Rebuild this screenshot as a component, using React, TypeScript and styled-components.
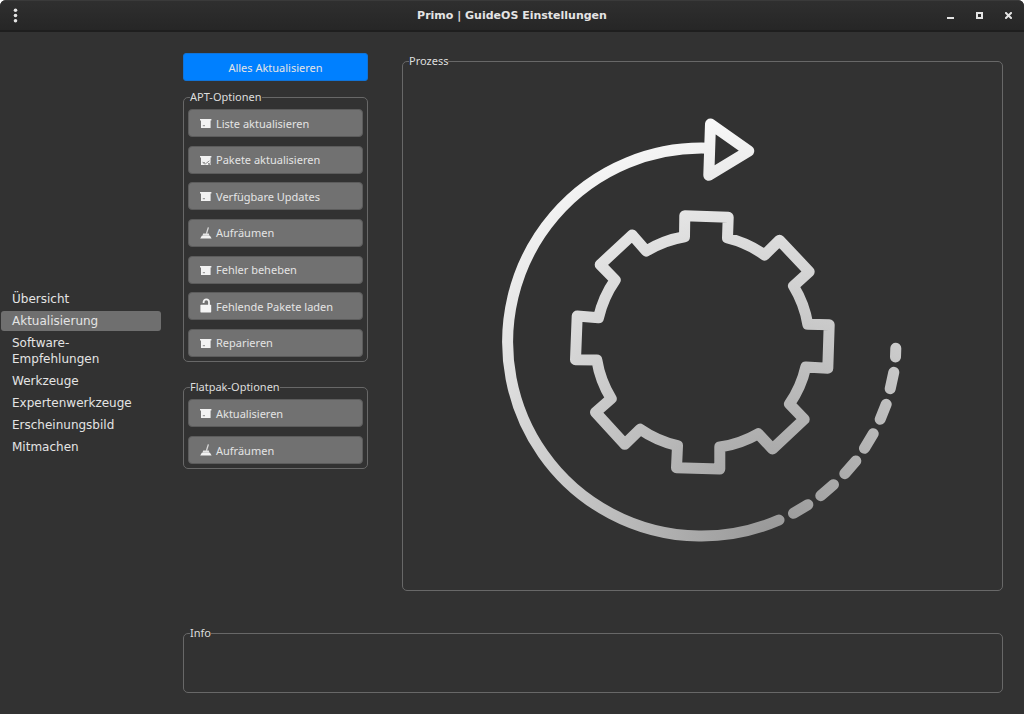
import React from "react";
import styled, { createGlobalStyle } from "styled-components";

const GlobalStyle = createGlobalStyle`
  *, *::before, *::after { box-sizing: border-box; }
  body {
    margin: 0;
    background: #ffffff;
    font-family: "Noto Sans", "Open Sans", sans-serif;
    font-size: 11px;
    color: #dedede;
  }
`;

const Window = styled.div`
  display: flex;
  flex-direction: column;
  min-height: 100vh;
  border-radius: 6px 6px 0 0;
  overflow: hidden;
  background: #323232;
`;

const TitleBar = styled.header`
  display: grid;
  grid-template-columns: 1fr auto 1fr;
  align-items: center;
  height: 32px;
  padding: 0 1px;
  background: linear-gradient(#2f2f2f, #262626);
  border-top: 1px solid #3a3a3a;
  border-bottom: 2px solid #1e1e1e;
`;

const Title = styled.h1`
  margin: 0;
  font: bold 11px/16px "DejaVu Sans", sans-serif;
  color: #e4e4e4;
`;

const WindowControls = styled.div`
  display: flex;
  justify-content: flex-end;
`;

const TitleButton = styled.button`
  display: flex;
  align-items: center;
  justify-content: center;
  width: 29px;
  height: 28px;
  padding: 0;
  border: 0;
  background: none;
  color: #e4e4e4;
`;

const Body = styled.div`
  display: flex;
  flex: 1;
`;

const Sidebar = styled.nav`
  display: flex;
  flex-direction: column;
  justify-content: center;
  gap: 2px;
  width: 162px;
  padding: 0 1px;
`;

const NavItem = styled.a<{ $active?: boolean }>`
  padding: 2px 11px;
  border-radius: 3px;
  font: 12px/16px "DejaVu Sans", sans-serif;
  color: #e4e4e4;
  text-decoration: none;
  background: ${(p) => (p.$active ? "#6f6f6f" : "transparent")};
`;

const Main = styled.main`
  display: flex;
  flex-direction: column;
  flex: 1;
  gap: 34px;
  padding: 21px;
`;

const Columns = styled.div`
  display: flex;
  flex: 1;
  gap: 34px;
`;

const Options = styled.div`
  display: flex;
  flex-direction: column;
  width: 185px;
`;

const Group = styled.fieldset<{ $gap?: number; $height?: number }>`
  display: flex;
  flex-direction: column;
  min-width: 0;
  height: ${(p) => (p.$height ? `${p.$height}px` : "auto")};
  margin: ${(p) => p.$gap ?? 0}px 0 0;
  padding: 4px;
  border: 1px solid #686868;
  border-radius: 5px;
`;

const ProcessGroup = styled(Group)`
  flex: 1;
`;

const Legend = styled.legend`
  margin-left: 2px;
  padding: 0;
  line-height: 16px;
`;

const ButtonList = styled.div<{ $height?: number }>`
  display: flex;
  flex-direction: column;
  justify-content: space-between;
  height: ${(p) => p.$height}px;
`;

const UpdateAllButton = styled.button`
  height: 28px;
  padding: 0;
  border: 1px solid #1173d6;
  border-radius: 3px;
  background: #0080ff;
  font: inherit;
  color: #e4e4e4;
`;

const OptionButton = styled.button`
  display: flex;
  align-items: center;
  gap: 4px;
  height: 28px;
  padding: 0 11px;
  border: 1px solid #5c5c5c;
  border-radius: 4px;
  background: #717171;
  font: inherit;
  color: #e4e4e4;
`;

const Drawing = styled.svg`
  flex: 1;
  width: 100%;
  min-height: 0;
`;

type IconKind = "box" | "boxCheck" | "broom" | "unlock";

const OptionIcon = ({ kind }: { kind: IconKind }) => (
  <svg width="12" height="16" viewBox="0 0 12 16" aria-hidden="true">
    {(kind === "box" || kind === "boxCheck") && (
      <>
        <path d="M0 4H11.4V5.5H10.6V13H1V5.5H0Z" fill="#f2f2f2" />
        <path d="M2.8 10.7H5" stroke="#8a8a8a" strokeWidth="1" />
      </>
    )}
    {kind === "boxCheck" && (
      <path d="M2.6 10.2L5 12.2L9.4 8.8M7.6 10.6L10.2 13.2M10.6 10.6L8 13.2" stroke="#8a8a8a" strokeWidth="0.9" fill="none" />
    )}
    {kind === "broom" && (
      <>
        <path d="M8.4 2.4L6.4 8.8" stroke="#d8d8d8" strokeWidth="1.3" fill="none" />
        <path d="M3.2 8.6H8.8L9.4 10.8H2.4Z" fill="#e6e6e6" />
        <path d="M1.8 10.8H10L11.6 13.6H0.2Z" fill="#f2f2f2" />
      </>
    )}
    {kind === "unlock" && (
      <>
        <path d="M3.6 5V4A2.7 2.7 0 0 1 9 4V8" stroke="#f2f2f2" strokeWidth="1.8" fill="none" />
        <rect x="0.4" y="6.8" width="10.8" height="7.6" rx="0.6" fill="#f5f5f5" />
      </>
    )}
  </svg>
);

const UpdateDrawing = () => (
  <Drawing viewBox="-295 -269 591 513" role="img" aria-label="Aktualisierung">
    <defs>
      <radialGradient id="metal" gradientUnits="userSpaceOnUse" cx="73" cy="198" r="430">
        <stop offset="0" stopColor="#979797" />
        <stop offset="1" stopColor="#f9f9f9" />
      </radialGradient>
    </defs>
    <g fill="none" stroke="url(#metal)" strokeWidth="11" strokeLinecap="round" strokeLinejoin="round">
      <path d="M77 178A194 194 0 1 1 6 -193.8" />
      <path d="M8.5 -218L46.8 -191L6.8 -166.7Z" />
      <path
        d="M-17.5 -105.3L-17.2 -126.3L26.2 -124.7L25.5 -104
          A107 107 0 0 1 62.5 -87L77.5 -101.7L107.2 -70.3L91.5 -56
          A107 107 0 0 1 105.8 -17.7L127.2 -17.3L125.8 26.3L103.8 25
          A107 107 0 0 1 87.5 62L102.2 77.3L70.5 107L56.2 91.7
          A107 107 0 0 1 17.8 105L17.8 127L-25.5 125.7L-24.5 103.7
          A107 107 0 0 1 -61.8 87.3L-77.2 102.3L-106.5 70.3L-90.8 56.7
          A107 107 0 0 1 -105.2 18L-126.5 17.7L-124.8 -26L-103.5 -24.3
          A107 107 0 0 1 -86.8 -62L-101.8 -77.3L-69.8 -107L-55.8 -91
          A107 107 0 0 1 -17.5 -105.3Z"
      />
      <path
        d="M193.8 6.3L193.5 15M191.8 30.3L188.2 46.7M184.2 62.3L178.2 77.3M171.2 91.7L162.5 106.3
          M153.8 119L142.8 131.7M131.5 142.7L118.8 153.7M105.8 162.7L91.5 171.3"
      />
    </g>
  </Drawing>
);

const navItems = [
  "Übersicht",
  "Aktualisierung",
  "Software-Empfehlungen",
  "Werkzeuge",
  "Expertenwerkzeuge",
  "Erscheinungsbild",
  "Mitmachen",
];

const aptOptions: { label: string; icon: IconKind }[] = [
  { label: "Liste aktualisieren", icon: "box" },
  { label: "Pakete aktualisieren", icon: "boxCheck" },
  { label: "Verfügbare Updates", icon: "box" },
  { label: "Aufräumen", icon: "broom" },
  { label: "Fehler beheben", icon: "box" },
  { label: "Fehlende Pakete laden", icon: "unlock" },
  { label: "Reparieren", icon: "box" },
];

const flatpakOptions: { label: string; icon: IconKind }[] = [
  { label: "Aktualisieren", icon: "box" },
  { label: "Aufräumen", icon: "broom" },
];

export default function App() {
  return (
    <>
      <GlobalStyle />
      <Window>
        <TitleBar>
          <TitleButton aria-label="Menü">
            <svg width="5" height="15" viewBox="0 0 5 15" fill="currentColor">
              <circle cx="2.5" cy="2.2" r="1.8" />
              <circle cx="2.5" cy="7.5" r="1.8" />
              <circle cx="2.5" cy="12.8" r="1.8" />
            </svg>
          </TitleButton>
          <Title>Primo | GuideOS Einstellungen</Title>
          <WindowControls>
            <TitleButton aria-label="Minimieren">
              <svg width="7" height="7" viewBox="0 0 7 7">
                <path d="M0 6H7" stroke="currentColor" strokeWidth="2" />
              </svg>
            </TitleButton>
            <TitleButton aria-label="Maximieren">
              <svg width="7" height="7" viewBox="0 0 7 7">
                <rect x="1" y="1" width="5" height="5" fill="none" stroke="currentColor" strokeWidth="2" />
              </svg>
            </TitleButton>
            <TitleButton aria-label="Schließen">
              <svg width="7" height="7" viewBox="0 0 7 7">
                <path d="M0.3 0.3L6.7 6.7M6.7 0.3L0.3 6.7" stroke="currentColor" strokeWidth="2" />
              </svg>
            </TitleButton>
          </WindowControls>
        </TitleBar>
        <Body>
          <Sidebar>
            {navItems.map((label) => (
              <NavItem key={label} href="#" $active={label === "Aktualisierung"}>
                {label}
              </NavItem>
            ))}
          </Sidebar>
          <Main>
            <Columns>
              <Options>
                <UpdateAllButton>Alles Aktualisieren</UpdateAllButton>
                <Group $gap={8}>
                  <Legend>APT-Optionen</Legend>
                  <ButtonList $height={248}>
                    {aptOptions.map(({ label, icon }) => (
                      <OptionButton key={label}>
                        <OptionIcon kind={icon} />
                        {label}
                      </OptionButton>
                    ))}
                  </ButtonList>
                </Group>
                <Group $gap={17}>
                  <Legend>Flatpak-Optionen</Legend>
                  <ButtonList $height={65}>
                    {flatpakOptions.map(({ label, icon }) => (
                      <OptionButton key={label}>
                        <OptionIcon kind={icon} />
                        {label}
                      </OptionButton>
                    ))}
                  </ButtonList>
                </Group>
              </Options>
              <ProcessGroup>
                <Legend>Prozess</Legend>
                <UpdateDrawing />
              </ProcessGroup>
            </Columns>
            <Group $height={68}>
              <Legend>Info</Legend>
            </Group>
          </Main>
        </Body>
      </Window>
    </>
  );
}
